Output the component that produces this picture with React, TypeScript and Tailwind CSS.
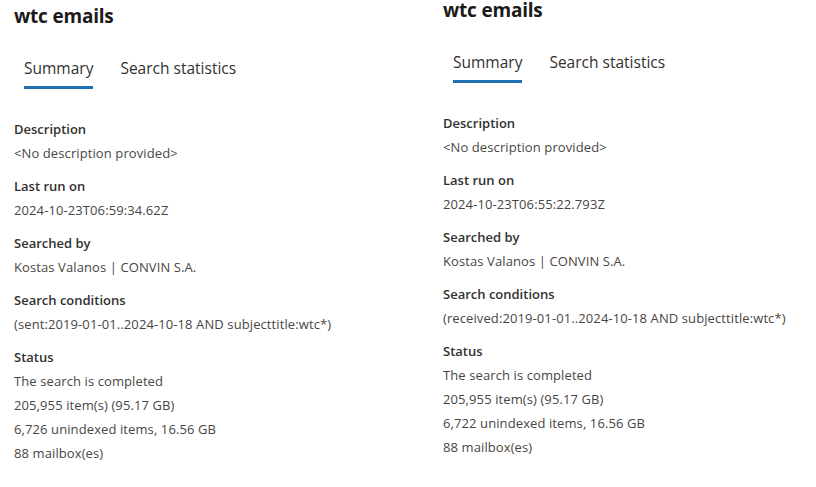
const font = { fontFamily: '"Segoe UI", "Open Sans", "Noto Sans", sans-serif' };

interface Field {
  label: string;
  values: string[];
}

interface PanelProps {
  lastRun: string;
  condition: string;
  unindexed: string;
}

function SearchPanel({ lastRun, condition, unindexed }: PanelProps) {
  const fields: Field[] = [
    { label: "Description", values: ["<No description provided>"] },
    { label: "Last run on", values: [lastRun] },
    { label: "Searched by", values: ["Kostas Valanos | CONVIN S.A."] },
    { label: "Search conditions", values: [condition] },
    {
      label: "Status",
      values: [
        "The search is completed",
        "205,955 item(s) (95.17 GB)",
        unindexed,
        "88 mailbox(es)",
      ],
    },
  ];

  return (
    <div className="w-[429px] shrink-0 pl-[14px]">
      <h1 className="text-[19px] leading-[20px] font-bold text-[#1b1a19] tracking-[-0.2px]">wtc emails</h1>

      <div className="mt-[30px] flex gap-[27px] pl-[10px]">
        <div className="flex flex-col">
          <span className="text-[15.5px] leading-[24px] text-[#323130]">Summary</span>
          <span className="mt-[6px] h-[3px] bg-[#1f6fb2]" />
        </div>
        <span className="text-[15.5px] leading-[24px] text-[#323130]">Search statistics</span>
      </div>

      <div className="mt-[28px] flex flex-col gap-[9px]">
        {fields.map((f) => (
          <div key={f.label} className="flex flex-col">
            <span className="text-[13px] leading-[24px] font-semibold text-[#323130]">{f.label}</span>
            {f.values.map((v) => (
              <span key={v} className="text-[13px] leading-[24px] text-[#484644] tracking-[0.1px]">
                {v}
              </span>
            ))}
          </div>
        ))}
      </div>
    </div>
  );
}

export default function App() {
  return (
    <div className="w-[816px] h-[487px] bg-white flex items-start overflow-hidden" style={font}>
      <div className="pt-[6px]">
        <SearchPanel
          lastRun="2024-10-23T06:59:34.62Z"
          condition="(sent:2019-01-01..2024-10-18 AND subjecttitle:wtc*)"
          unindexed="6,726 unindexed items, 16.56 GB"
        />
      </div>
      <SearchPanel
        lastRun="2024-10-23T06:55:22.793Z"
        condition="(received:2019-01-01..2024-10-18 AND subjecttitle:wtc*)"
        unindexed="6,722 unindexed items, 16.56 GB"
      />
    </div>
  );
}
